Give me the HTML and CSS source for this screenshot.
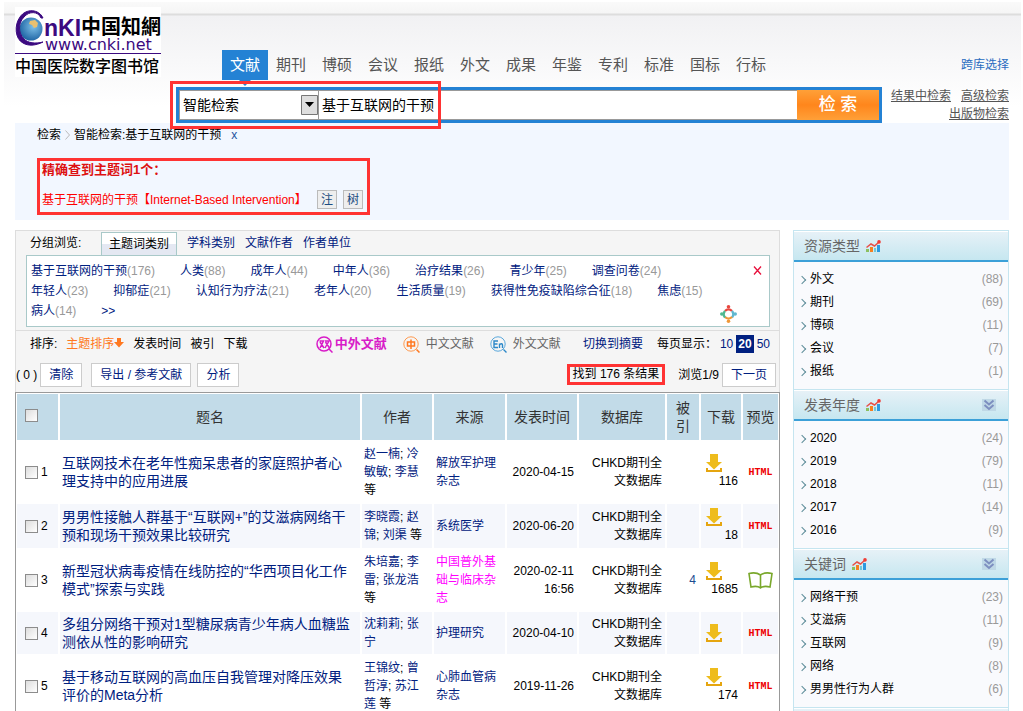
FILE: index.html
```html
<!DOCTYPE html>
<html lang="zh-CN">
<head>
<meta charset="utf-8">
<title>中国医院数字图书馆</title>
<link rel="stylesheet" href="styles.css">
</head>
<body>
<svg class="defs" aria-hidden="true">
  <symbol id="chart" viewBox="0 0 15 12">
    <path d="M0 12V9h3v3z" fill="#8cc060"/><path d="M4 12V7h3v5z" fill="#f58020"/><path d="M8 12V8h2v4z" fill="#70c8d8"/><path d="M11 12V5h3v7z" fill="#2c9ae0"/>
    <path d="M.5 7.500 5 4l3.500 2L13 2" fill="none" stroke="#e85048" stroke-width="1.500"/><circle cx="13" cy="1.900" r="1.800" fill="#f03c34"/>
  </symbol>
  <symbol id="arrow" viewBox="0 0 16 18">
    <path d="M0 14h2v2h12v-2h2v4H0z" fill="#e5a50f"/><path d="M4 0h8v8h4l-8 7.500L0 8h4z" fill="#eebc1c"/>
  </symbol>
  <symbol id="more" viewBox="0 0 14 12">
    <path d="M0 0h14v12H0z" fill="#bfd8e6"/><path d="m2.500 1.500 4.500 4 4.500-4M2.500 6l4.500 4L11.500 6" fill="none" stroke="#7d8fc0" stroke-width="2"/>
  </symbol>
</svg>
<header class="top">
  <a class="logo" href="#" aria-label="中国知网">
    <svg viewBox="0 0 146 70" width="146" height="70">
      <defs><radialGradient id="globe" cx=".6" cy=".4" r=".7"><stop offset="0" stop-color="#7dc0e8"/><stop offset="1" stop-color="#145a9c"/></radialGradient></defs>
      <path d="M0 0h146v70H0z" fill="#fff"/>
      <circle cx="16" cy="22" r="11.500" fill="url(#globe)"/>
      <path d="m15 14 5-1 3 3-1 4-3 1-2-3-3-1z" fill="#e8c070"/>
      <path d="M28 11C24 2 11 1 5 10-1 18 0 32 8 36c5 3 12 3 20-1-8 2-15 1-19-3-6-6-6-16 0-22 5-6 14-6 17 1z" fill="#3c0a80" stroke="#3c0a80"/>
      <text x="29" y="29" class="logo-latin">nKI</text>
      <text x="66" y="27" class="logo-hand">中国知網</text>
      <text x="30" y="43" class="logo-url">www.cnki.net</text>
      <path d="M0 46.500h146" stroke="#3c0a80"/>
      <text x="0" y="65" class="logo-name">中国医院数字图书馆</text>
    </svg>
  </a>
  <div class="top-main">
    <div class="nav-row">
      <nav class="nav">
        <a class="active" href="#">文献</a><a href="#">期刊</a><a href="#">博硕</a><a href="#">会议</a><a href="#">报纸</a><a href="#">外文</a><a href="#">成果</a><a href="#">年鉴</a><a href="#">专利</a><a href="#">标准</a><a href="#">国标</a><a href="#">行标</a>
      </nav>
      <a class="cross" href="#">跨库选择</a>
    </div>
    <div class="search-row">
      <form class="search">
        <div class="kind">
          <select aria-label="检索方式"><option>智能检索</option></select>
          <svg viewBox="0 0 17 20" width="17" height="20"><path d="M.5.500h16v19H.5z" fill="#dedede" stroke="#777"/><path d="M4 7h9l-4.500 5z" fill="#000"/></svg>
        </div>
        <input type="text" aria-label="检索词" value="基于互联网的干预">
        <button type="button">检 索</button>
        <span class="mark"></span>
      </form>
      <div class="search-links"><a href="#">结果中检索</a><a href="#">高级检索</a><a href="#">出版物检索</a></div>
    </div>
  </div>
</header>
<section class="query">
  <div class="crumbs"><span>检索</span><svg viewBox="0 0 5 10" width="5" height="10"><path d="m.5.500 4 4.500-4 4.500" fill="none" stroke="#bbb"/></svg><span>智能检索:基于互联网的干预</span><a href="#">x</a></div>
  <div class="term">
    <strong>精确查到主题词1个：</strong>
    <div class="term-row"><span>基于互联网的干预【Internet-Based Intervention】</span><button type="button">注</button><button type="button">树</button></div>
  </div>
</section>
<div class="columns">
<main class="results">
  <div class="panel">
    <div class="tabs"><span class="label">分组浏览:</span><a class="on" href="#">主题词类别</a><a href="#">学科类别</a><a href="#">文献作者</a><a href="#">作者单位</a></div>
    <div class="topics">
      <ul>
        <li><a href="#">基于互联网的干预</a>(176)</li><li><a href="#">人类</a>(88)</li><li><a href="#">成年人</a>(44)</li><li><a href="#">中年人</a>(36)</li><li><a href="#">治疗结果</a>(26)</li><li><a href="#">青少年</a>(25)</li><li><a href="#">调查问卷</a>(24)</li>
        <li><a href="#">年轻人</a>(23)</li><li><a href="#">抑郁症</a>(21)</li><li><a href="#">认知行为疗法</a>(21)</li><li><a href="#">老年人</a>(20)</li><li><a href="#">生活质量</a>(19)</li><li><a href="#">获得性免疫缺陷综合征</a>(18)</li><li><a href="#">焦虑</a>(15)</li>
        <li><a href="#">病人</a>(14)</li><li><a href="#">&gt;&gt;</a></li>
      </ul>
      <div class="topic-tools">
        <button type="button" aria-label="关闭"><svg viewBox="0 0 9 9" width="9" height="9"><path d="m1 0.500 7 8M8 .5l-7 8" stroke="#e8103c" stroke-width="1.300"/></svg></button>
        <svg viewBox="0 0 17 18" width="17" height="18" fill="none" stroke-width="2.400"><path d="M5 6a5 5 0 0 1 7 0" stroke="#e84840"/><path d="M12 6a5 5 0 0 1 0 6.500" stroke="#60b8d0"/><path d="M12 12a5 5 0 0 1-7 0" stroke="#f09838"/><path d="M5 12.500A5 5 0 0 1 5 6" stroke="#50b890"/><g stroke="none"><circle cx="8.500" cy="1.800" r="1.800" fill="#e84840"/><circle cx="15.200" cy="9" r="1.800" fill="#60b8d0"/><circle cx="8.500" cy="16.200" r="1.800" fill="#f09838"/><circle cx="1.800" cy="9" r="1.800" fill="#50b890"/></g></svg>
      </div>
    </div>
    <div class="sort">
      <div class="orders"><span>排序:</span><a class="cur" href="#">主题排序<svg viewBox="0 0 10 10" width="10" height="10"><path d="M3 0h4v4h3L5 9.500 0 4h3z" fill="#ff7820"/></svg></a><a href="#">发表时间</a><a href="#">被引</a><a href="#">下载</a></div>
      <div class="langs">
        <a class="both" href="#"><svg viewBox="0 0 17 17" width="17" height="17"><circle cx="8" cy="8" r="7" fill="none" stroke="#d81cc8" stroke-width="1.500"/><path d="m13 13 3.500 3.500M3.500 5H7.500L4 12M4 6l4 6M9 5h4l-4 7M9.500 6l4 6" fill="none" stroke="#d81cc8" stroke-width="1.500"/></svg>中外文献</a>
        <a href="#"><svg viewBox="0 0 17 17" width="17" height="17"><circle cx="8" cy="8" r="7.200" fill="none" stroke="#ff9a50"/><path d="m13.500 13.500 3 3M4.500 6h7v4h-7zM8 3.500v9.500" fill="none" stroke="#ff7820" stroke-width="1.500"/></svg>中文文献</a>
        <a href="#"><svg viewBox="0 0 17 17" width="17" height="17"><circle cx="8" cy="8" r="7.200" fill="none" stroke="#5aa8dc"/><path d="m13.500 13.500 3 3M8 5H4v6.500h4M4 8h3.500M9.500 12V7.500M9.500 9c1-2 3-1.500 3 0v3" fill="none" stroke="#2c88c8" stroke-width="1.400"/></svg>外文文献</a>
      </div>
      <div class="sizes"><a class="switch" href="#">切换到摘要</a><span>每页显示：</span><a href="#">10</a><a class="now" href="#">20</a><a href="#">50</a></div>
    </div>
    <div class="tools">
      <span>( 0 )</span><button class="b-clear" type="button">清除</button><button class="b-export" type="button">导出 / 参考文献</button><button type="button">分析</button>
      <span class="found">找到 176 条结果</span><span class="pages">浏览1/9</span><button type="button">下一页</button>
    </div>
  </div>
  <table class="list">
    <colgroup><col class="c-check"><col><col class="c-author"><col class="c-source"><col class="c-date"><col class="c-db"><col class="c-cited"><col class="c-down"><col class="c-view"></colgroup>
    <thead><tr><th class="check"><input type="checkbox" aria-label="全选"></th><th>题名</th><th>作者</th><th>来源</th><th>发表时间</th><th>数据库</th><th>被引</th><th>下载</th><th>预览</th></tr></thead>
    <tbody>
      <tr><td class="check"><label><input type="checkbox">1</label></td><td class="title"><a href="#">互联网技术在老年性痴呆患者的家庭照护者心理支持中的应用进展</a></td><td><a href="#">赵一楠</a>; <a href="#">冷敏敏</a>; <a href="#">李慧</a> 等</td><td class="src"><a href="#">解放军护理杂志</a></td><td class="num">2020-04-15</td><td class="num">CHKD期刊全文数据库</td><td class="num"></td><td class="down"><svg width="16" height="18"><use href="#arrow"/></svg><span>116</span></td><td class="view"><a href="#">HTML</a></td></tr>
      <tr><td class="check"><label><input type="checkbox">2</label></td><td class="title"><a href="#">男男性接触人群基于“互联网+”的艾滋病网络干预和现场干预效果比较研究</a></td><td><a href="#">李晓霞</a>; <a href="#">赵锦</a>; <a href="#">刘渠</a> 等</td><td class="src"><a href="#">系统医学</a></td><td class="num">2020-06-20</td><td class="num">CHKD期刊全文数据库</td><td class="num"></td><td class="down"><svg width="16" height="18"><use href="#arrow"/></svg><span>18</span></td><td class="view"><a href="#">HTML</a></td></tr>
      <tr><td class="check"><label><input type="checkbox">3</label></td><td class="title"><a href="#">新型冠状病毒疫情在线防控的“华西项目化工作模式”探索与实践</a></td><td><a href="#">朱培嘉</a>; <a href="#">李雷</a>; <a href="#">张龙浩</a> 等</td><td class="src"><a class="first" href="#">中国普外基础与临床杂志</a></td><td class="num">2020-02-11 16:56</td><td class="num">CHKD期刊全文数据库</td><td class="num"><a href="#">4</a></td><td class="down"><svg width="16" height="18"><use href="#arrow"/></svg><span>1685</span></td><td class="view"><a href="#" aria-label="阅读"><svg viewBox="0 0 25 17" width="25" height="17"><path d="M12.500 3C9 .5 5 .5 1 1.500L3 15c4-1 7-1 9.500 1C15 14 18 14 22 15l2-13.500C20 .5 16 .5 12.500 3zv13" fill="#fff" stroke="#7aa82c" stroke-width="1.600"/></svg></a></td></tr>
      <tr><td class="check"><label><input type="checkbox">4</label></td><td class="title"><a href="#">多组分网络干预对1型糖尿病青少年病人血糖监测依从性的影响研究</a></td><td><a href="#">沈莉莉</a>; <a href="#">张宁</a></td><td class="src"><a href="#">护理研究</a></td><td class="num">2020-04-10</td><td class="num">CHKD期刊全文数据库</td><td class="num"></td><td class="down"><svg width="16" height="18"><use href="#arrow"/></svg></td><td class="view"><a href="#">HTML</a></td></tr>
      <tr><td class="check"><label><input type="checkbox">5</label></td><td class="title"><a href="#">基于移动互联网的高血压自我管理对降压效果评价的Meta分析</a></td><td><a href="#">王锦纹</a>; <a href="#">曾哲淳</a>; <a href="#">苏江莲</a> 等</td><td class="src"><a href="#">心肺血管病杂志</a></td><td class="num">2019-11-26</td><td class="num">CHKD期刊全文数据库</td><td class="num"></td><td class="down"><svg width="16" height="18"><use href="#arrow"/></svg><span>174</span></td><td class="view"><a href="#">HTML</a></td></tr>
    </tbody>
  </table>
</main>
<aside class="side">
  <section><h2>资源类型<svg width="15" height="12"><use href="#chart"/></svg></h2>
    <ul><li><a href="#">外文</a><span>(88)</span></li><li><a href="#">期刊</a><span>(69)</span></li><li><a href="#">博硕</a><span>(11)</span></li><li><a href="#">会议</a><span>(7)</span></li><li><a href="#">报纸</a><span>(1)</span></li></ul></section>
  <section><h2>发表年度<svg width="15" height="12"><use href="#chart"/></svg><svg class="fold" width="14" height="12"><use href="#more"/></svg></h2>
    <ul><li><a href="#">2020</a><span>(24)</span></li><li><a href="#">2019</a><span>(79)</span></li><li><a href="#">2018</a><span>(11)</span></li><li><a href="#">2017</a><span>(14)</span></li><li><a href="#">2016</a><span>(9)</span></li></ul></section>
  <section><h2>关键词<svg width="15" height="12"><use href="#chart"/></svg><svg class="fold" width="14" height="12"><use href="#more"/></svg></h2>
    <ul><li><a href="#">网络干预</a><span>(23)</span></li><li><a href="#">艾滋病</a><span>(11)</span></li><li><a href="#">互联网</a><span>(9)</span></li><li><a href="#">网络</a><span>(8)</span></li><li><a href="#">男男性行为人群</a><span>(6)</span></li></ul></section>
  <section><h2></h2></section>
</aside>
</div>
</body>
</html>
```

FILE: styles.css
```css
* { box-sizing: border-box; }
html { scrollbar-width: none; }
body {
  margin: 0;
  background: #fff;
  color: #000;
  font: 12px/18px "Liberation Sans", "Noto Sans CJK SC", sans-serif;
}
a { color: inherit; text-decoration: none; }
ul { list-style: none; margin: 0; padding: 0; }
button, input, select { font: inherit; margin: 0; padding: 0; }
svg { flex: none; }
.defs { position: absolute; width: 0; height: 0; }

/* header */
.top {
  display: flex;
  gap: 15px;
  margin: 2px 2px 0 4px;
  padding: 0 12px 0 11px;
  background: linear-gradient(#fafafa, #f5f5f5 11px, #ddd 12px, #ddd 13px, #f1f1f3 14px, #fff 105px);
}
.logo { flex: none; height: 70px; margin-top: 5px; }
.logo svg { display: block; }
.logo-latin { font: bold 23px "Liberation Sans", sans-serif; fill: #3c0a80; }
.logo-hand { font: bold 20px "Noto Sans CJK SC", sans-serif; }
.logo-url { font: 16px "DejaVu Sans", sans-serif; fill: #3c0a80; }
.logo-name { font: 500 16px "Noto Sans CJK SC", sans-serif; }
.top-main { flex: 1; padding-top: 48px; }
.nav-row { display: flex; justify-content: space-between; align-items: center; padding-left: 46px; height: 30px; }
.nav { display: flex; }
.nav a { position: relative; width: 46px; height: 30px; font-size: 15px; line-height: 30px; text-align: center; color: #555; }
.nav .active { background: #2482d4; color: #fff; }
.nav .active::after {
  content: "";
  position: absolute;
  left: 17px;
  top: 30px;
  border: 6px solid transparent;
  border-top-color: #2482d4;
  border-bottom: 0;
}
.cross { color: #2a6cc0; }
.search-row { display: flex; gap: 8px; margin-top: 7px; }
.search { position: relative; flex: 1; display: flex; height: 36px; border: 3px solid #2482d4; background: #fff; }
.kind { position: relative; flex: none; width: 140px; border: 1px solid #999; }
.kind select { width: 100%; height: 28px; padding-left: 3px; border: 0; background: #fff; appearance: none; font-size: 14px; color: #000; }
.kind svg { position: absolute; right: 0; top: 4px; pointer-events: none; }
.search input { flex: 1; min-width: 0; padding: 0 3px; border: solid #999; border-width: 1px 0; background: #fff; font-size: 14px; color: #000; }
.search button { width: 82px; border: 0; background: linear-gradient(#ffa038, #ff861c 50%, #ffa038); color: #fff; font-size: 17px; font-weight: 500; }
.mark { position: absolute; left: -9px; top: -9px; width: 271px; height: 48px; border: 3px solid #f33; pointer-events: none; }
.search-links { flex: none; display: flex; flex-wrap: wrap; justify-content: flex-end; column-gap: 10px; width: 119px; color: #555; }
.search-links a { text-decoration: underline; }

/* query summary */
.query { margin: 0 14px 0 15px; padding: 0 22px 5px; background: #f2f7ff; }
.crumbs { display: flex; align-items: center; gap: 4px; height: 24px; margin-bottom: 11px; }
.crumbs a { margin-left: 6px; color: #1c54a0; }
.term { display: inline-block; vertical-align: top; width: 333px; height: 57px; padding: 0 4px 0 2px; border: 3px solid #f33; color: #f00; }
.term strong { display: block; color: #d11; font-size: 13px; }
.term-row { display: flex; align-items: center; gap: 6px; margin-top: 11px; }
.term-row span { flex: 1; white-space: nowrap; }
.term-row button { width: 20px; height: 19px; border: 1px solid #bbb; background: #eee; color: #1c4c80; line-height: 16px; }

/* results */
.columns { display: flex; align-items: flex-start; gap: 13px; margin: 10px 14px 0 15px; }
.results { flex: 1; min-width: 0; }
.panel { border: 1px solid #ddd; border-bottom: 0; background: #f5f5f5; }
.tabs { display: flex; gap: 10px; padding: 1px 14px 0; color: #002080; line-height: 23px; }
.tabs .label { width: 61px; color: #000; }
.tabs .on { padding: 0 7px; border: 1px solid #a9c9c9; border-bottom: 0; height: 23px; background: linear-gradient(#fff 50%, #e4e8f2 50%); color: #000; }
.topics { display: flex; margin: 0 9px 3px 10px; min-height: 72px; padding: 5px 6px 3px 4px; border: 1px solid #a9c9c9; background: #fff; }
.topics ul { flex: 1; display: flex; flex-wrap: wrap; align-content: flex-start; column-gap: 25px; line-height: 20px; color: #999; }
.topics a { color: #002080; }
.topic-tools { display: flex; flex-direction: column; justify-content: space-between; width: 43px; }
.topic-tools button { display: flex; align-self: flex-end; padding: 5px 1px; border: 0; background: none; }
.sort { display: flex; align-items: center; justify-content: space-between; height: 27px; padding: 0 9px 0 14px; border-top: 1px solid #ddd; white-space: nowrap; }
.orders, .langs, .sizes { display: flex; align-items: center; }
.orders { gap: 9px; }
.orders .cur { color: #ff7820; }
.langs { gap: 16px; padding-left: 46px; color: #666; }
.langs a { display: flex; align-items: center; gap: 6px; }
.langs .both { gap: 2px; color: #d81cc8; font-size: 13px; font-weight: bold; }
.sizes { gap: 3px; color: #002080; }
.sizes span { color: #000; }
.sizes .switch { margin-right: 11px; }
.sizes .now { padding: 0 2px; background: #002080; color: #fff; font-weight: bold; }
.tools { display: flex; align-items: center; height: 35px; padding-right: 3px; white-space: nowrap; }
.tools button { height: 24px; padding: 0 8px; border: 1px solid #ccc; background: #fff; color: #002080; }
.tools .b-clear { margin: 0 9px 0 3px; }
.tools .b-export { margin-right: 6px; }
.found { margin-left: auto; padding: 0 3px; border: 3px solid #f33; line-height: 15px; }
.pages { margin: 0 3px 0 13px; }

/* list */
.list { width: 100%; table-layout: fixed; border: 1px solid #999; border-collapse: separate; border-spacing: 0; }
.list th, .list td { border: 1px solid transparent; background-clip: padding-box; padding: 3px 2px; text-align: left; overflow-wrap: anywhere; }
.list th { height: 48px; padding: 3px; background-color: #c2dbe8; color: #333; font-size: 14px; font-weight: normal; text-align: center; }
.list tbody tr { height: 44px; }
.list tr:nth-child(even) td { background-color: #f5f7fc; }
.list a { color: #002080; }
.list .title { padding-right: 8px; font-size: 14px; }
.list .num { padding-right: 3px; text-align: right; }
.list .down { padding: 4px 3px 4px 2px; text-align: right; }
.list .num a { color: #1c4c90; }
.list .src .first { color: #f0f; }
.list .check { padding-left: 8px; text-align: left; }
.list .check label { display: flex; align-items: center; gap: 3px; }
.list .check input { appearance: none; width: 13px; height: 13px; border: 1px solid #8c8c8c; background: linear-gradient(135deg, #ddd, #fff); }
.list .down svg { display: block; margin-left: 3px; }
.list .down span { display: block; }
.list .view { padding: 0; text-align: center; }
.list .view a { display: block; color: #e00; font: bold 10px "Liberation Mono", monospace; }
.list .view svg { vertical-align: middle; }
.c-check { width: 43px; }
.c-author, .c-date { width: 72px; }
.c-source { width: 73px; }
.c-db { width: 88px; }
.c-cited { width: 34px; }
.c-down { width: 42px; }
.c-view { width: 37px; }

/* facets */
.side { flex: none; width: 216px; border: 1px solid #c5e5f0; background: #f9fafd; }
.side h2 { display: flex; align-items: center; gap: 6px; height: 31px; margin: 0; padding: 0 12px 0 10px; border-top: 1px solid #fff; border-bottom: 2px solid #3ca0d8; background: linear-gradient(#e6f1f7, #c6e7f0); color: #666; font-size: 14px; font-weight: normal; }
.side section + section { border-top: 1px solid #c5e5f0; }
.side .fold { margin-left: auto; }
.side ul { padding: 6px 5px; line-height: 23px; }
.side li { display: flex; justify-content: space-between; color: #999; }
.side li a { display: flex; align-items: center; color: #000; }
.side li a::before { content: ""; width: 5px; height: 5px; margin-right: 5px; border: solid #5c8c98; border-width: 1px 1px 0 0; transform: rotate(45deg); }
```
